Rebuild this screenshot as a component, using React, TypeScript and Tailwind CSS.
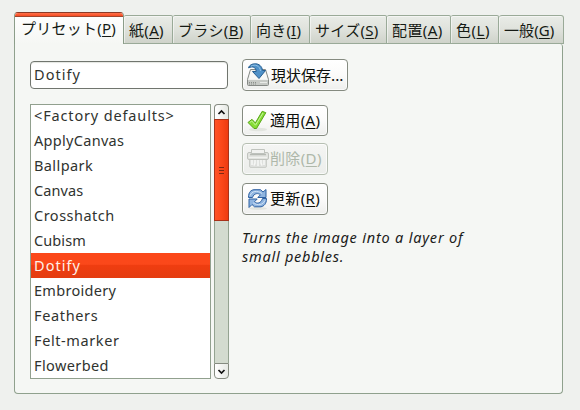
import React from "react";

type Tab = { label: string; k: string; w: string; ls: string };

const tabs: Tab[] = [
  { label: "紙", k: "A", w: "w-[49px]", ls: "tracking-[0.3px]" },
  { label: "ブラシ", k: "B", w: "w-[78px]", ls: "tracking-[0.35px]" },
  { label: "向き", k: "I", w: "w-[59px]", ls: "tracking-[0.2px]" },
  { label: "サイズ", k: "S", w: "w-[77px]", ls: "tracking-[0.3px]" },
  { label: "配置", k: "A", w: "w-[64px]", ls: "tracking-[0.4px]" },
  { label: "色", k: "L", w: "w-[48px]", ls: "tracking-[0.5px]" },
  { label: "一般", k: "G", w: "w-[65px]", ls: "tracking-[0.1px]" },
];

const presets: { name: string; ls: string }[] = [
  { name: "<Factory defaults>", ls: "tracking-[0.85px]" },
  { name: "ApplyCanvas", ls: "tracking-[0.3px]" },
  { name: "Ballpark", ls: "tracking-[0.4px]" },
  { name: "Canvas", ls: "tracking-[0.1px]" },
  { name: "Crosshatch", ls: "tracking-[0.5px]" },
  { name: "Cubism", ls: "tracking-[0.1px]" },
  { name: "Dotify", ls: "tracking-[1.05px]" },
  { name: "Embroidery", ls: "tracking-[0.3px]" },
  { name: "Feathers", ls: "tracking-[0.65px]" },
  { name: "Felt-marker", ls: "tracking-[0.6px]" },
  { name: "Flowerbed", ls: "tracking-[0.4px]" },
];

function Mnemonic({ label, k }: { label: string; k: string }) {
  return (
    <span className="whitespace-nowrap">
      {label}
      <span className="font-['Noto_Sans']">
        (<span className="underline decoration-1 underline-offset-2">{k}</span>)
      </span>
    </span>
  );
}

function SaveIcon() {
  return (
    <svg width="24" height="24" viewBox="0 0 24 24" className="shrink-0">
      <path d="M4.500 6.500h15l3 10v5q0 1-1 1h-19q-1 0-1-1v-5z" fill="#e9ebe8" stroke="#858985" />
      <path d="M5 7.500h14l2.500 9h-19z" fill="#f8f9f7" />
      <path d="M2 17h20v5H2z" fill="#c6c9c5" />
      <path d="M3 19.500h8M3 21h8" stroke="#8b8f8a" strokeDasharray="1 1" />
      <path d="M14 19.500h7" stroke="#e9ebe8" />
      <path d="M2.500 4.800C4 -.5 15.500-1.500 16.500 7.500h3L13 15.500 6.500 8.500h3.700C10 4 6.500 3 2.500 4.800z" fill="#4f91c8" stroke="#275e91" strokeLinejoin="round" />
      <path d="M5 3.200C9 .8 14 2.800 14.500 8" stroke="#93c2e6" fill="none" />
    </svg>
  );
}

function ApplyIcon() {
  return (
    <svg width="24" height="24" viewBox="0 0 24 24" className="shrink-0">
      <ellipse cx="12" cy="20.500" rx="9" ry="1.800" fill="#e2e5df" />
      <path d="M2 13.500l4-3.200 3.300 3.700L16.200 2.300l3.600 1.400L10.500 19.500H8z" fill="#86dd35" stroke="#58a619" strokeLinejoin="round" />
      <path d="M3.800 13.500l2-1.500 3.700 4.200L17 4" stroke="#c4f59a" fill="none" />
    </svg>
  );
}

function ShredderIcon() {
  return (
    <svg width="24" height="24" viewBox="0 0 24 24" className="shrink-0">
      <path d="M3.500 10h17v9q0 1.500-1.500 1.500H5q-1.500 0-1.500-1.500z" fill="#dddfdc" stroke="#cbcec9" />
      <path d="M6 12v6M9 12v4l-1 2.500M12 12v7M15 12v4l1 2.500M18 12v6" stroke="#f6f7f5" strokeWidth="1.600" fill="none" />
      <rect x="1.500" y="5.500" width="21" height="7" rx="1.500" fill="#e2e4e0" stroke="#c0c3be" />
      <path d="M5.500 2.500h13v4h-13z" fill="#f1f2f0" stroke="#c0c4be" />
      <path d="M4 7.500h16" stroke="#b6bab4" strokeWidth="1.500" />
      <path d="M3 10.500h18" stroke="#f1f2f0" />
    </svg>
  );
}

function RefreshIcon() {
  return (
    <svg width="24" height="24" viewBox="0 0 24 24" className="shrink-0">
      <ellipse cx="12" cy="21.500" rx="9" ry="1.500" fill="#e2e5df" />
      <g fill="#8fb5e0" stroke="#2f62a3" strokeLinejoin="round">
        <path d="M2.500 10.500C2.500 5 5 3 8 2.700H14.500L17 5l3-2.500V10.500h-8.200l2.600-2.700C12.500 6 8 5.800 6.500 10.500z" />
        <path d="M20.500 11.500C20.500 17 18 19 15 19.800H8.500L6 17.500 3 20.500v-8.500h8.200l-2.600 2.700c1.900 2.300 6.400 2 7.900-3.200z" />
      </g>
      <path d="M4.200 8.500C5.500 4 11.500 3 16 6.500M18.800 13.500C17.500 18 11.500 19 7 15.800" stroke="#d0e2f5" fill="none" />
    </svg>
  );
}

function Button({ icon, children, className, off }: { icon: React.ReactNode; children: React.ReactNode; className: string; off?: boolean }) {
  return (
    <button
      className={`flex items-center rounded-[4px] border pl-[3px] text-[15px] leading-none shadow-[inset_0_0_0_1px_rgba(255,255,255,0.7)] ${
        off
          ? "border-[#b6bfb2] bg-linear-to-b from-[#f4f5f3] to-[#eceeeb] text-[#aeb8aa]"
          : "border-[#858b80] bg-linear-to-b from-white via-[#fbfbfa] to-[#eeefed] text-[#0c0f0b]"
      } ${className}`}
    >
      {icon}
      <span className="whitespace-nowrap pb-[2px]">{children}</span>
    </button>
  );
}

export default function App() {
  return (
    <div className="h-[410px] w-[580px] overflow-hidden bg-[#eff1ee] pl-[14px] pt-3 font-['Noto_Sans_CJK_JP',sans-serif] text-[15px] text-[#151a14]">
      <div className="relative z-10 flex h-8 items-end">
        <div className="flex h-8 w-[110px] flex-col overflow-hidden rounded-t-[4px] border-x border-t border-[#8b9d89] border-t-[#8c3a26] bg-linear-to-b from-white to-[#f5f7f4]">
          <div className="h-[4px] shrink-0 border-b border-[#a0452d] bg-linear-to-b from-[#ff7049] to-[#f54a20]" />
          <div className="flex h-[22px] items-center pl-[6px] leading-none tracking-[0.25px]">
            <Mnemonic label="プリセット" k="P" />
          </div>
        </div>
        {tabs.map((t, i) => (
          <div
            key={i}
            className={`flex h-[29px] items-center border-y border-r border-[#9aaa98] bg-linear-to-b from-[#e9ece7] via-[#dfe2dc] to-[#cfd3ca] pl-[5px] leading-none shadow-[inset_1px_1px_0_rgba(255,255,255,0.5)] ${t.w} ${t.ls} ${i === tabs.length - 1 ? "rounded-t-[3px]" : "rounded-t-[2px]"}`}
          >
            <Mnemonic label={t.label} k={t.k} />
          </div>
        ))}
      </div>
      <div className="flex h-[350px] w-[549px] rounded-b-[4px] rounded-tr-[3px] border-x border-b border-[#8fa18d] bg-[#f5f7f4] pl-[15px] pt-[16px]">
        <div className="w-[199px] shrink-0">
          <div className="mt-px flex h-[28px] w-[198px] items-center rounded-[4px] border border-[#70756e] bg-white pl-[3px] font-['Noto_Sans'] text-[14.500px] tracking-[1.05px] text-[#30332f] shadow-[inset_0_1px_1px_#e4e6e2]">
            Dotify
          </div>
          <div className="mt-[15px] flex h-[275px] gap-[3px]">
            <div className="w-[182px] overflow-hidden border border-[#91a08e] bg-white">
              <div className="-mt-[2px]">
                {presets.map((p) => (
                  <div
                    key={p.name}
                    className={`h-[25px] pl-[3px] font-['Noto_Sans'] text-[14.500px] leading-[25px] ${p.ls} ${
                      p.name === "Dotify" ? "bg-linear-to-b from-[#fb481a] from-45% via-[#ef3d10] via-50% to-[#e43c10] text-[#fff0e8]" : "text-[#30332f]"
                    }`}
                  >
                    {p.name}
                  </div>
                ))}
              </div>
            </div>
            <div className="flex w-[15px] flex-col">
              <div className="flex h-[15px] items-center justify-center rounded-t-[4px] border border-b-0 border-[#858b80] bg-linear-to-r from-white to-[#e6e9e4]">
                <svg width="9" height="7" viewBox="0 0 9 7"><path d="M1.500 5l3-3 3 3" fill="none" stroke="#111" strokeWidth="1.700" /></svg>
              </div>
              <div className="flex h-[102px] flex-col items-center justify-center gap-[2px] border border-[#a7321a] bg-linear-to-r from-[#ff5325] via-[#fb481a] to-[#ee3b10]">
                <div className="h-px w-[5px] bg-[#802812]" />
                <div className="h-px w-[5px] bg-[#802812]" />
                <div className="h-px w-[5px] bg-[#802812]" />
              </div>
              <div className="flex-1 border-x border-[#94a391] bg-[#d3dbcf]" />
              <div className="flex h-[16px] items-center justify-center rounded-b-[4px] border border-[#858b80] bg-linear-to-r from-white to-[#e6e9e4]">
                <svg width="9" height="7" viewBox="0 0 9 7"><path d="M1.500 2l3 3 3-3" fill="none" stroke="#111" strokeWidth="1.700" /></svg>
              </div>
            </div>
          </div>
        </div>
        <div className="-mt-[1px] ml-[13px] w-[260px]">
          <Button icon={<SaveIcon />} className="h-[32px] w-[106px]"><span className="ml-px">現状保存...</span></Button>
          <Button icon={<ApplyIcon />} className="mt-[14px] h-[31px] w-[86px] tracking-[0.35px]"><Mnemonic label="適用" k="A" /></Button>
          <Button off icon={<ShredderIcon />} className="mt-[7px] h-[32px] w-[86px] tracking-[0.35px]"><Mnemonic label="削除" k="D" /></Button>
          <Button icon={<RefreshIcon />} className="mt-[8px] h-[32px] w-[86px] tracking-[0.35px]"><Mnemonic label="更新" k="R" /></Button>
          <div className="mt-[13px] whitespace-nowrap font-['Noto_Sans'] text-[14.500px] italic leading-[19px] text-[#1b201a]">
            <div className="tracking-[0.8px]">Turns the image into a layer of</div>
            <div className="tracking-[0.75px]">small pebbles.</div>
          </div>
        </div>
      </div>
    </div>
  );
}
